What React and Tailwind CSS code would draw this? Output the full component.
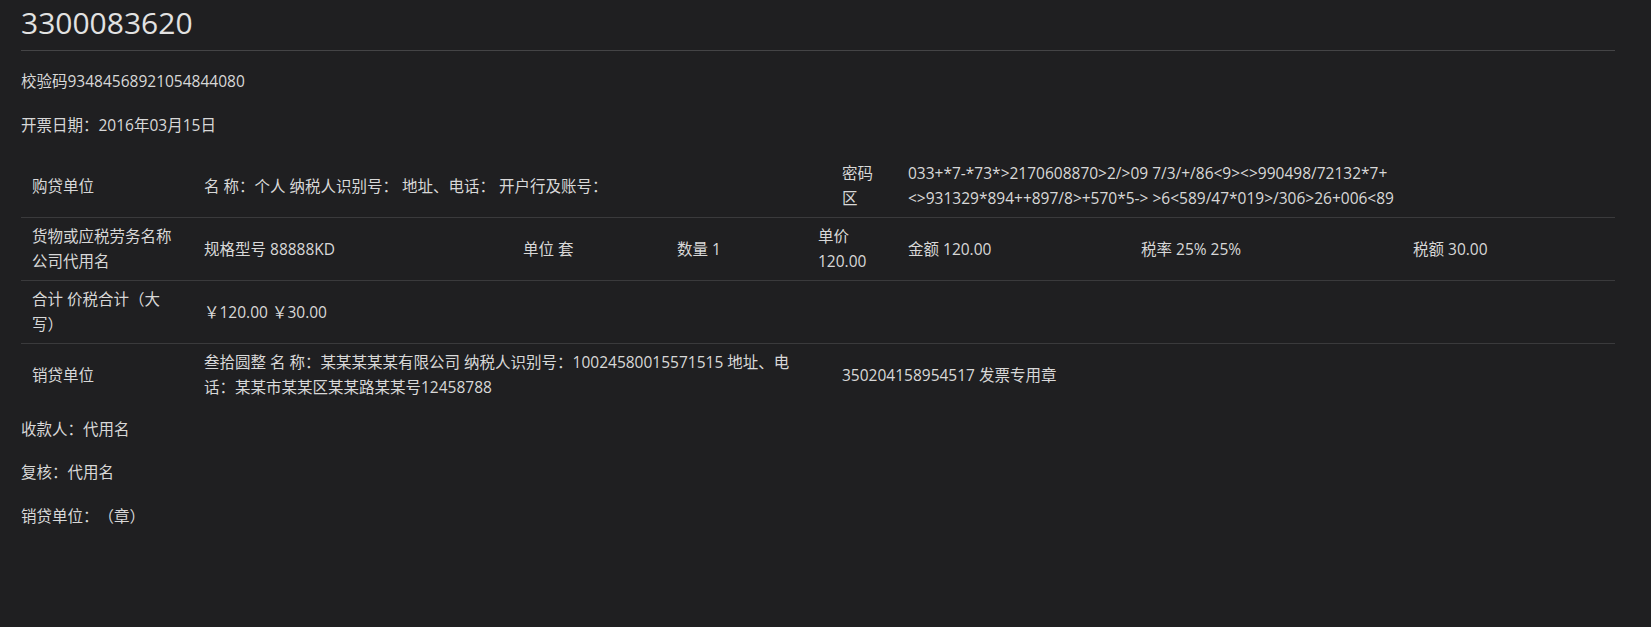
import React from 'react'

const font = { fontFamily: '"Open Sans", "Noto Sans CJK SC", sans-serif' }

// one table row = its own grid, columns differ per row
function Row({ cols, border = true, children }) {
  return (
    <div
      className={`grid items-center min-h-[62px] py-[6px] ${border ? 'border-b border-[#3a3a3c]' : ''} ${cols}`}
    >
      {children}
    </div>
  )
}

export default function App() {
  return (
    <div
      className="min-h-screen w-full bg-[#1f1f21] text-[#d8d8d8] text-[15.5px] leading-[25px] pl-[21px] pt-[6px] [text-spacing-trim:space-all]"
      style={font}
    >
      <div className="w-[1594px]">
        <h1 className="text-[30px] leading-[34px] font-medium text-[#e2e2e2]">3300083620</h1>
        <div className="mt-[10px] h-px bg-[#444446]" />

        <p className="mt-[18px]">校验码93484568921054844080</p>
        <p className="mt-[19px]">开票日期：2016年03月15日</p>

        <div className="mt-[17px]">
          {/* 购贷单位 */}
          <Row cols="grid-cols-[172px_638px_66px_718px]">
            <div className="pl-[11px]">购贷单位</div>
            <div className="pl-[11px]">名 称：个人 纳税人识别号： 地址、电话： 开户行及账号：</div>
            <div className="pl-[11px]">
              <div className="w-[36px]">密码区</div>
            </div>
            <div className="pl-[11px]">
              <div className="w-[560px]">
                033+*7-*73*&gt;2170608870&gt;2/&gt;09 7/3/+/86&lt;9&gt;&lt;&gt;990498/72132*7+ &lt;&gt;931329*894++897/8&gt;+570*5-&gt; &gt;6&lt;589/47*019&gt;/306&gt;26+006&lt;89
              </div>
            </div>
          </Row>

          {/* 货物 */}
          <Row cols="grid-cols-[172px_319px_154px_141px_90px_233px_272px_213px]">
            <div className="pl-[11px]">
              <div className="w-[148px]">货物或应税劳务名称 公司代用名</div>
            </div>
            <div className="pl-[11px]">规格型号 88888KD</div>
            <div className="pl-[11px]">单位 套</div>
            <div className="pl-[11px]">数量 1</div>
            <div className="pl-[11px]">
              <div className="w-[66px]">单价 120.00</div>
            </div>
            <div className="pl-[11px]">金额 120.00</div>
            <div className="pl-[11px]">税率 25% 25%</div>
            <div className="pl-[11px]">税额 30.00</div>
          </Row>

          {/* 合计 */}
          <Row cols="grid-cols-[172px_1422px]">
            <div className="pl-[11px]">
              <div className="w-[148px]">合计 价税合计（大写）</div>
            </div>
            <div className="pl-[11px]">￥120.00 ￥30.00</div>
          </Row>

          {/* 销贷单位 */}
          <Row cols="grid-cols-[172px_638px_784px]" border={false}>
            <div className="pl-[11px]">销贷单位</div>
            <div className="pl-[11px]">
              <div className="w-[593px]">
                叁拾圆整 名 称：某某某某某有限公司 纳税人识别号：10024580015571515 地址、电话：某某市某某区某某路某某号12458788
              </div>
            </div>
            <div className="pl-[11px]">350204158954517 发票专用章</div>
          </Row>
        </div>

        <p className="mt-[11px]">收款人：代用名</p>
        <p className="mt-[18px]">复核：代用名</p>
        <p className="mt-[19px]">销贷单位：（章）</p>
      </div>
    </div>
  )
}
